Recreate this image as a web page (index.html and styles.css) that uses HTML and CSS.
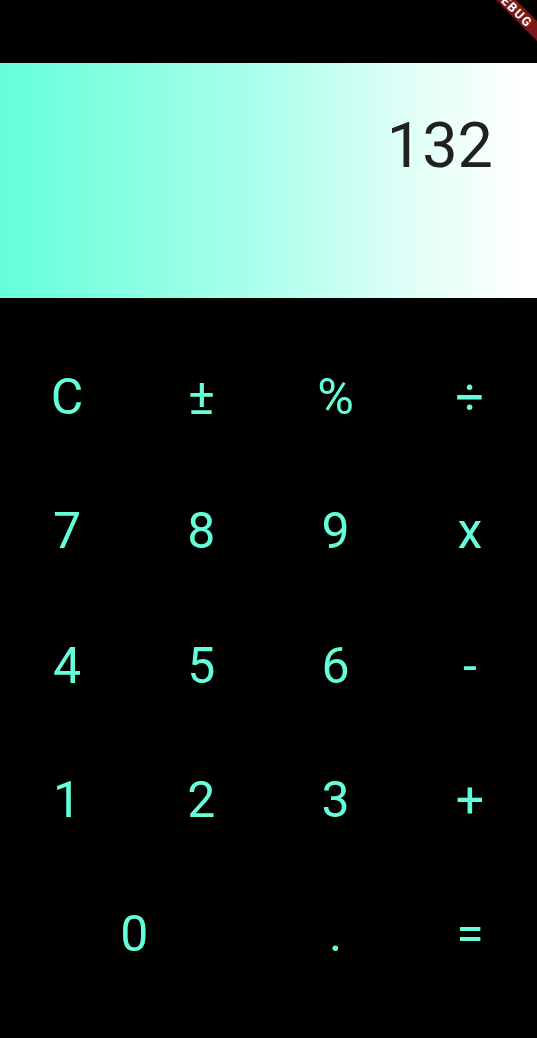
FILE: index.html
```html
<!DOCTYPE html>
<html>
<head>
<meta charset="utf-8">
<link rel="stylesheet" href="styles.css">
</head>
<body>
<div class="app">
  <div class="status"></div>
  <div class="display">
    <span class="value">132</span>
  </div>
  <div class="keys">
    <div class="key">C</div>
    <div class="key">±</div>
    <div class="key">%</div>
    <div class="key">÷</div>
    <div class="key">7</div>
    <div class="key">8</div>
    <div class="key">9</div>
    <div class="key">x</div>
    <div class="key">4</div>
    <div class="key">5</div>
    <div class="key">6</div>
    <div class="key">-</div>
    <div class="key">1</div>
    <div class="key">2</div>
    <div class="key">3</div>
    <div class="key">+</div>
    <div class="key wide">0</div>
    <div class="key">.</div>
    <div class="key">=</div>
  </div>
  <div class="banner"><span>DEBUG</span></div>
</div>
</body>
</html>
```
FILE: styles.css
```css
html, body {
  margin: 0;
  padding: 0;
  background: #000;
}
.app {
  position: relative;
  width: 537px;
  height: 1038px;
  overflow: hidden;
  background: #000;
  font-family: Roboto, "Liberation Sans", sans-serif;
}
.status {
  height: 63px;
}
.display {
  height: 235px;
  box-sizing: border-box;
  background: linear-gradient(to right, #64ffda 0%, #a6ffea 45%, #e6fff9 80%, #ffffff 97%);
  display: flex;
  justify-content: flex-end;
  align-items: flex-start;
  padding: 45px 44px 0 0;
}
.value {
  font-size: 63px;
  line-height: 76px;
  color: #212121;
}
.keys {
  display: grid;
  grid-template-columns: repeat(4, 1fr);
  grid-auto-rows: 134.25px;
  padding-top: 32px;
}
.key {
  display: flex;
  align-items: center;
  justify-content: center;
  color: #64ffda;
  font-size: 50px;
  line-height: 1;
}
.wide {
  grid-column: span 2;
}
.banner {
  position: absolute;
  left: 464px;
  top: 1px;
  width: 100px;
  height: 14px;
  background: #7c1717;
  transform: rotate(45deg);
  display: flex;
  align-items: center;
  justify-content: center;
  color: #fff;
  font-size: 12.5px;
  font-weight: bold;
  letter-spacing: 1.5px;
}
```
